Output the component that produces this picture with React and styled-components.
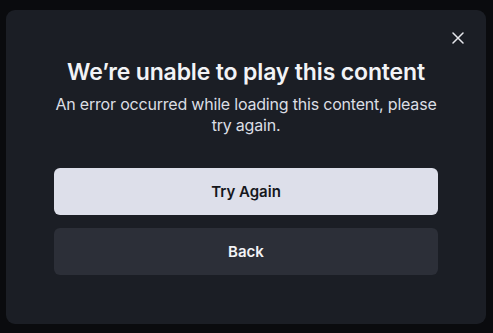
import React from "react";
import { styled, createGlobalStyle } from "styled-components";

const GlobalStyle = createGlobalStyle`
  html, body {
    margin: 0;
    padding: 0;
    background: #0a0b0e;
    font-family: Inter, "Noto Sans", sans-serif;
  }
`;

const App = () => {
  return (
    <Page>
      <GlobalStyle />
      <Dialog>
        <CloseButton aria-label="Close">
          <svg width="12" height="12" viewBox="0 0 12 12">
            <path d="M1 1 L11 11 M11 1 L1 11" stroke="#e6e7ec" strokeWidth="1.5" strokeLinecap="round" />
          </svg>
        </CloseButton>
        <Title>We’re unable to play this content</Title>
        <Message>An error occurred while loading this content, please try again.</Message>
        <Actions>
          <Button $primary>Try Again</Button>
          <Button>Back</Button>
        </Actions>
      </Dialog>
    </Page>
  );
};

export default App;

const Page = styled.div`
  width: 493px;
  height: 333px;
  box-sizing: border-box;
  padding: 10px 7px 9px 6px;
`;

const Dialog = styled.div`
  position: relative;
  height: 314px;
  box-sizing: border-box;
  background: #1b1e25;
  border-radius: 9px;
  padding: 48px 48px;
  display: flex;
  flex-direction: column;
  align-items: center;
`;

const CloseButton = styled.button`
  position: absolute;
  top: 16px;
  right: 16px;
  width: 24px;
  height: 24px;
  padding: 0;
  border: none;
  background: transparent;
  display: flex;
  align-items: center;
  justify-content: center;
  cursor: pointer;
`;

const Title = styled.h1`
  margin: 0;
  font-size: 23px;
  line-height: 28px;
  font-weight: 600;
  letter-spacing: -0.15px;
  color: #f2f3f6;
  text-align: center;
`;

const Message = styled.p`
  margin: 8px 0 0;
  font-size: 16px;
  line-height: 21px;
  font-weight: 400;
  letter-spacing: -0.2px;
  color: #dcdee4;
  text-align: center;
`;

const Actions = styled.div`
  width: 100%;
  margin-top: 32px;
  display: flex;
  flex-direction: column;
  gap: 13px;
`;

const Button = styled.button`
  width: 100%;
  height: 47px;
  border: none;
  border-radius: 6px;
  font-family: Inter, "Noto Sans", sans-serif;
  font-size: 15px;
  font-weight: 600;
  background: ${(p) => (p.$primary ? "#dddfea" : "#2c2f38")};
  color: ${(p) => (p.$primary ? "#15171c" : "#f2f3f6")};
  cursor: pointer;
`;
